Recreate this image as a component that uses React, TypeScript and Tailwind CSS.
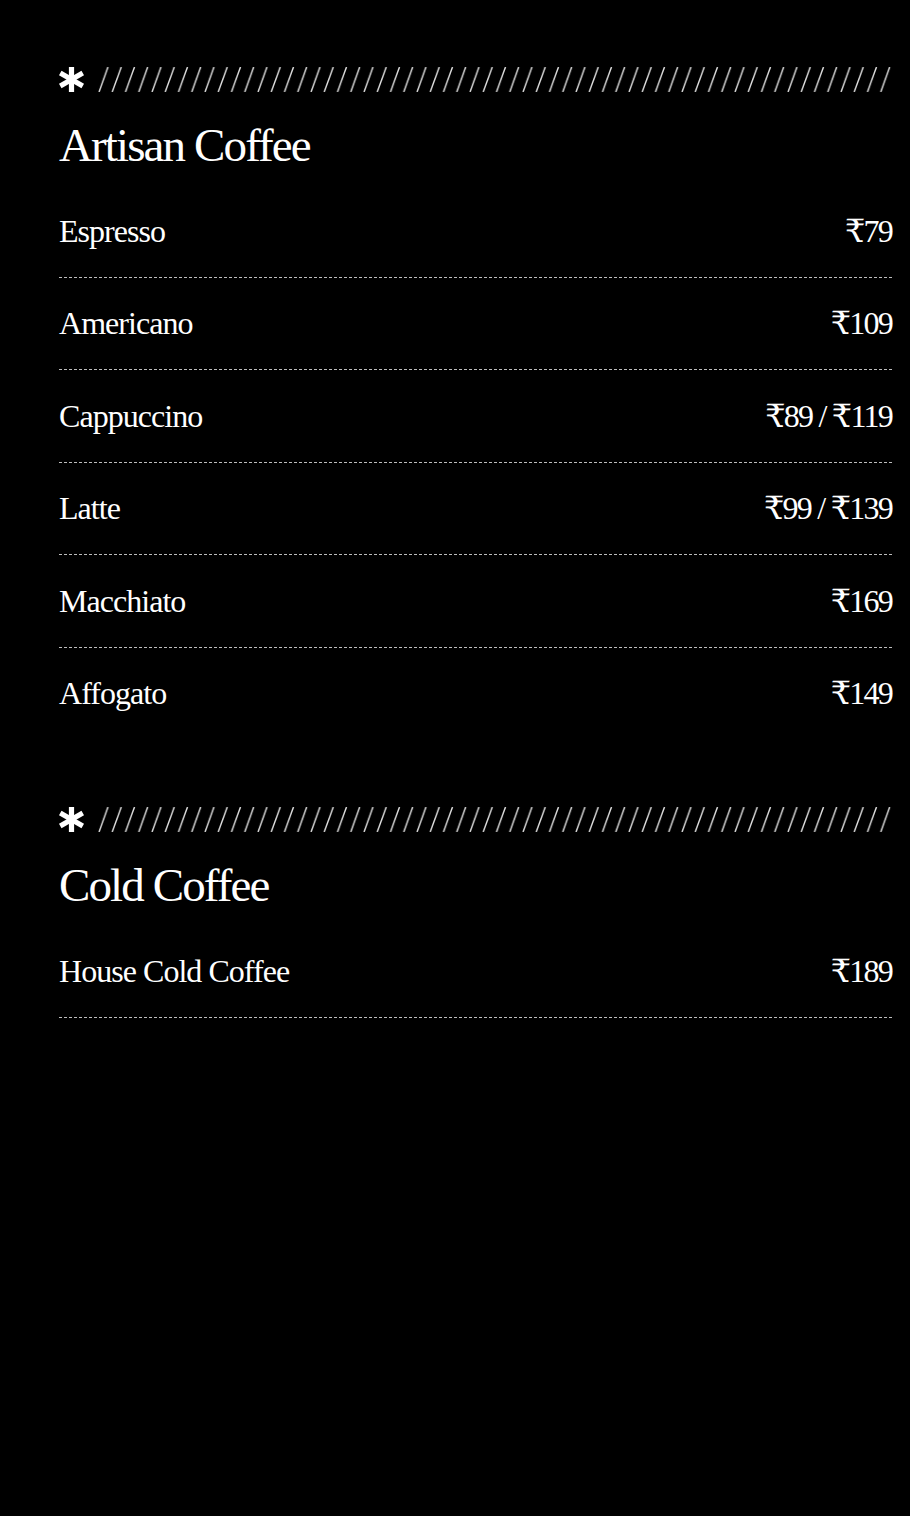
import { Fragment } from "react";

interface MenuItem {
  name: string;
  price: string;
}

interface MenuSection {
  title: string;
  items: MenuItem[];
}

const sections: MenuSection[] = [
  {
    title: "Artisan Coffee",
    items: [
      { name: "Espresso", price: "₹79" },
      { name: "Americano", price: "₹109" },
      { name: "Cappuccino", price: "₹89 / ₹119" },
      { name: "Latte", price: "₹99 / ₹139" },
      { name: "Macchiato", price: "₹169" },
      { name: "Affogato", price: "₹149" },
    ],
  },
  {
    title: "Cold Coffee",
    items: [{ name: "House Cold Coffee", price: "₹189" }],
  },
];

function Asterisk() {
  return (
    <svg className="h-[25px] w-[25px] shrink-0" viewBox="0 0 24 24">
      <g stroke="#fff" strokeWidth="5" strokeLinecap="butt">
        <line x1="12" y1="0" x2="12" y2="24" />
        <line x1="1.2" y1="5.8" x2="22.8" y2="18.2" />
        <line x1="1.2" y1="18.2" x2="22.8" y2="5.8" />
      </g>
    </svg>
  );
}

function Hatch({ id }: { id: string }) {
  return (
    <svg className="h-[25px] flex-1">
      <defs>
        <pattern height="25" id={id} patternUnits="userSpaceOnUse" width="13.25">
          <line stroke="#e0e0e0" strokeWidth="1.4" x1="1" x2="10" y1="25" y2="0" />
        </pattern>
      </defs>
      <rect fill={`url(#${id})`} height="25" width="100%" />
    </svg>
  );
}

export default function App() {
  return (
    <div className="min-h-[1516px] bg-black pl-[59px] pr-[18px] pt-[67px] text-white [font-family:'Liberation_Serif','DejaVu_Serif',serif]">
      {sections.map((section, si) => (
        <section className="mb-[68px]" key={section.title}>
          {/* Section header */}
          <div className="flex items-center gap-[14px]">
            <Asterisk />
            <Hatch id={`hatch-${si}`} />
          </div>
          <h2 className="mt-[29px] text-[47px] leading-[48px] tracking-[-0.04em]">
            {section.title}
          </h2>

          <div className="mt-[16px]">
            {section.items.map((item, i) => (
              <Fragment key={item.name}>
                <div className="flex items-center justify-between py-[27.75px] text-[32px] leading-[36px] tracking-[-0.03em]">
                  <span>{item.name}</span>
                  <span className="tracking-[-0.055em]">{item.price}</span>
                </div>
                {(i < section.items.length - 1 || section.items.length === 1) && (
                  <div className="border-t border-dashed border-[#bdbdbd]" />
                )}
              </Fragment>
            ))}
          </div>
        </section>
      ))}
    </div>
  );
}
